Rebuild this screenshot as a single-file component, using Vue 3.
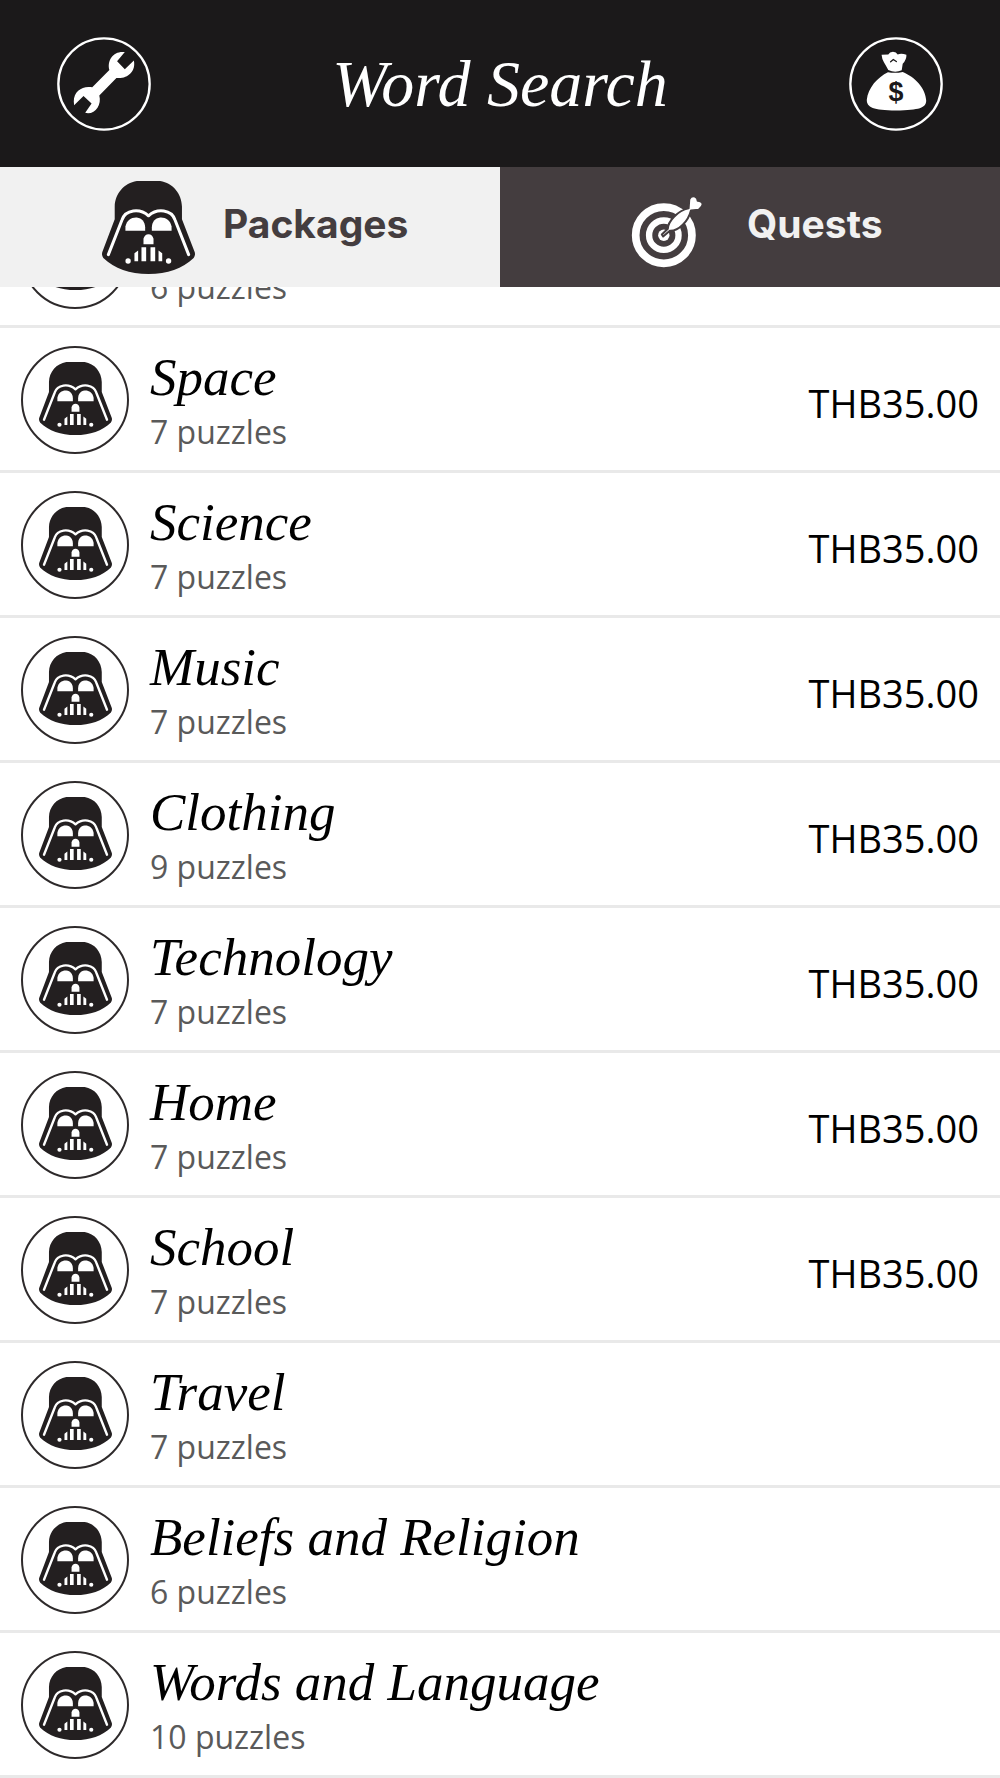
<script setup>
import { ref } from 'vue'

const activeTab = ref('packages')

const packages = [
  { name: '', count: 6, price: '' },
  { name: 'Space', count: 7, price: 'THB35.00' },
  { name: 'Science', count: 7, price: 'THB35.00' },
  { name: 'Music', count: 7, price: 'THB35.00' },
  { name: 'Clothing', count: 9, price: 'THB35.00' },
  { name: 'Technology', count: 7, price: 'THB35.00' },
  { name: 'Home', count: 7, price: 'THB35.00' },
  { name: 'School', count: 7, price: 'THB35.00' },
  { name: 'Travel', count: 7, price: '' },
  { name: 'Beliefs and Religion', count: 6, price: '' },
  { name: 'Words and Language', count: 10, price: '' },
]
</script>

<template>
  <div class="app">
    <svg class="defs" aria-hidden="true">
      <symbol id="helmet" viewBox="0 0 278 278">
        <path
          fill="#231f20"
          d="M104 0H174C212 6 238 38 239 76V114L277 212Q280 222 274 230C240 262 196 278 139 278S38 262 4 230Q-2 222 1 212L38 114V76C39 38 66 6 104 0Z"
        />
        <path
          fill="none"
          stroke="#fff"
          stroke-width="9"
          stroke-linecap="round"
          stroke-linejoin="round"
          d="M19 220L60 116C70 86 112 80 139 104C166 80 208 86 218 116L259 220"
        />
        <g fill="#fff">
          <path d="M70 149V136C74 117 88 108 104 109C120 111 128 122 129 138V149Z" />
          <path d="M208 149V136C204 117 190 108 174 109C158 111 150 122 149 138V149Z" />
          <path d="M124 189V173Q127 159 139 159T154 173V189Z" />
          <path d="M97 240V216L108 208V240ZM118 240V198H132V240ZM145 240V198H159V240ZM169 240V208L180 216V240Z" />
          <circle cx="78" cy="239" r="8" />
          <circle cx="199" cy="239" r="8" />
        </g>
      </symbol>
    </svg>

    <header class="header">
      <button class="round" type="button" aria-label="Settings">
        <svg viewBox="0 0 280 280">
          <circle cx="140" cy="140" r="136" fill="none" stroke="#fff" stroke-width="7" />
          <path
            fill="#fff"
            d="M202 45C170 40 148 68 156 98L105 150C78 144 50 160 50 192L51 203L79 176L103 198L84 226C112 233 134 204 126 174L177 122C208 126 236 104 229 70L202 96L179 72Z"
          />
        </svg>
      </button>
      <h1 class="title">Word Search</h1>
      <button class="round" type="button" aria-label="Coins">
        <svg viewBox="0 0 280 280">
          <circle cx="140" cy="140" r="136" fill="none" stroke="#fff" stroke-width="7" />
          <path
            fill="#fff"
            d="M97 53Q109 52 117 52Q121 44 131 44Q141 45 145 52Q156 48 171 53Q172 67 160 80L157 99Q137 108 117 98Q110 85 104 75Q98 65 97 53Z"
          />
          <path
            fill="#fff"
            d="M116 105Q138 109 160 104C196 119 229 152 230 190C229 211 211 218 140 219C72 218 53 210 53 187C56 152 86 119 116 105Z"
          />
          <path fill="none" stroke="#1b191a" stroke-width="4" stroke-linecap="round" d="M124 74L132 67L141 73" />
          <text x="140" y="190" text-anchor="middle" class="dollar">$</text>
        </svg>
      </button>
    </header>

    <nav class="tabs" aria-label="Sections">
      <button
        class="tab packages"
        type="button"
        :aria-pressed="activeTab === 'packages'"
        @click="activeTab = 'packages'"
      >
        <svg class="tab-helmet" aria-hidden="true"><use href="#helmet" /></svg>
        <span class="tab-label">Packages</span>
      </button>
      <button
        class="tab quests"
        type="button"
        :aria-pressed="activeTab === 'quests'"
        @click="activeTab = 'quests'"
      >
        <svg class="tab-target" viewBox="0 0 212 212" aria-hidden="true">
          <g fill="none" stroke="#fff">
            <circle cx="95" cy="117" r="84" stroke-width="23" />
            <circle cx="95" cy="117" r="44" stroke-width="19" />
          </g>
          <circle cx="95" cy="117" r="17" fill="#fff" />
          <path
            fill="#fff"
            stroke="#443d3f"
            stroke-width="6"
            stroke-linejoin="round"
            d="M93 121L89 115L107 98C107 76 136 44 169 37L171 10Q177-2 188 2Q196 5 196 14Q209 14 211 24Q211 33 199 41L176 43C168 75 140 105 113 104Z"
          />
        </svg>
        <span class="tab-label">Quests</span>
      </button>
    </nav>

    <ul class="list">
      <li v-for="(item, i) in packages" :key="i">
        <button class="row" type="button">
          <span class="badge">
            <svg aria-hidden="true"><use href="#helmet" /></svg>
          </span>
          <span class="info">
            <span class="name">{{ item.name }}</span>
            <span class="count">{{ item.count }} puzzles</span>
          </span>
          <span class="price">{{ item.price }}</span>
        </button>
      </li>
    </ul>
  </div>
</template>

<style>
body {
  margin: 0;
  background: #fff;
}
</style>

<style scoped>
.app {
  overflow: hidden;
  font-family: "Segoe UI", "Open Sans", "Noto Sans", sans-serif;
}

button {
  margin: 0;
  padding: 0;
  border: 0;
  background: none;
  color: inherit;
  font: inherit;
  text-align: left;
  cursor: pointer;
}

.defs {
  display: none;
}

.header {
  position: relative;
  z-index: 1;
  display: flex;
  align-items: center;
  justify-content: space-between;
  height: 167px;
  padding: 0 57px;
  background: #1b191a;
  color: #fff;
}

.round,
.round svg {
  display: block;
  width: 94px;
  height: 94px;
}

.dollar {
  fill: #1b191a;
  font: bold 80px "Liberation Sans", Arial, sans-serif;
}

.title {
  margin: 0;
  font: italic 66px/72px "Lucida Calligraphy", "Liberation Serif", serif;
}

.tabs {
  position: relative;
  z-index: 1;
  display: grid;
  grid-template-columns: 1fr 1fr;
  height: 120px;
}

.tab {
  display: flex;
  align-items: center;
  font: bold 39px/52px Nexa, Inter, sans-serif;
}

.packages {
  gap: 28px;
  padding-left: 102px;
  background: #f1f1f1;
  color: #443d3f;
}

.quests {
  gap: 44px;
  padding-left: 132px;
  background: #443d3f;
  color: #f1f1f1;
}

.tab-helmet {
  width: 93px;
  height: 93px;
}

.tab-target {
  width: 71px;
  height: 71px;
  margin-top: 8px;
  overflow: visible;
}

.tab-label {
  padding-bottom: 6px;
}

.list {
  margin: -104px 0 0;
  padding: 0;
  list-style: none;
}

.row {
  display: flex;
  align-items: center;
  box-sizing: border-box;
  width: 100%;
  height: 145px;
  padding: 2px 21px 0;
  border-bottom: 3px solid #e9e9e9;
  background: #fff;
}

.badge {
  display: flex;
  align-items: center;
  justify-content: center;
  box-sizing: border-box;
  width: 108px;
  height: 108px;
  padding-bottom: 4px;
  border: 2px solid #2e2a2b;
  border-radius: 50%;
}

.badge svg {
  width: 73px;
  height: 73px;
}

.info {
  display: flex;
  flex: 1;
  flex-direction: column;
  padding: 4px 0 0 21px;
}

.name {
  height: 60px;
  color: #000;
  font: italic 53px/60px "Lucida Calligraphy", "Liberation Serif", serif;
}

.count {
  color: #5a5a5a;
  font-size: 32px;
  line-height: 50px;
}

.price {
  padding-top: 6px;
  color: #000;
  font-size: 38px;
  line-height: 52px;
}
</style>
